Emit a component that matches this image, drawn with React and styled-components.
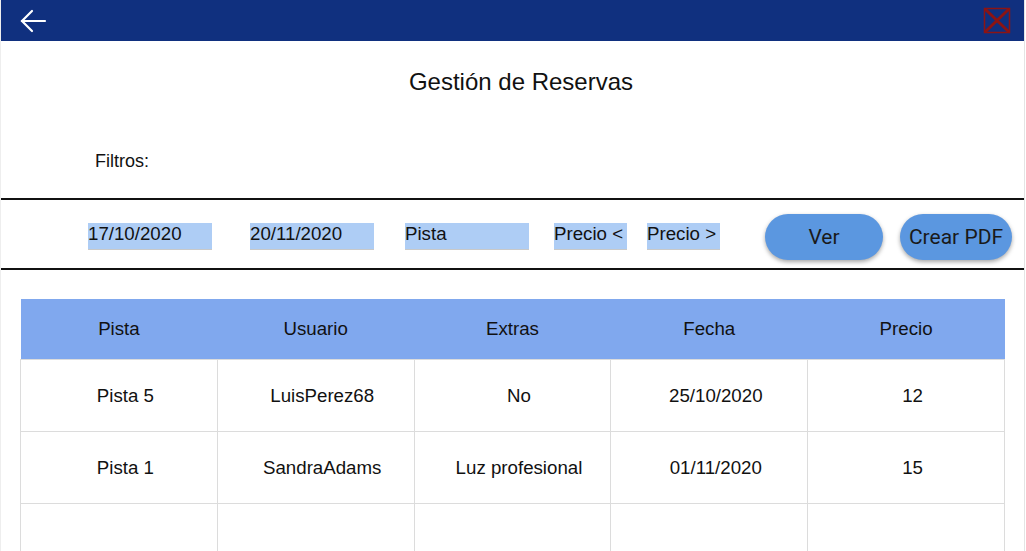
import React from 'react';
import styled, { createGlobalStyle } from 'styled-components';

const Global = createGlobalStyle`
  body {
    margin: 0;
    background: #fff;
    font-family: 'Liberation Sans', Arial, sans-serif;
    color: #111;
  }
`

const Page = styled.div`
  width: 1023px;
  height: 551px;
  overflow: hidden;
  border-left: 1px solid #eee;
  border-right: 1px solid #e4e4e4;
`

const TopBar = styled.header`
  height: 41px;
  background: #10307f;
  display: flex;
  justify-content: space-between;
  align-items: center;
  padding: 0 13px 0 18px;
`

const IconButton = styled.button`
  background: none;
  border: none;
  padding: 0;
  display: flex;
  cursor: pointer;
`

const Title = styled.h1`
  margin: 0;
  padding: 27px 0 0 17px;
  height: 42px;
  text-align: center;
  font-weight: normal;
  font-size: 24px;
`

const FilterLabel = styled.div`
  padding: 41px 0 0 94px;
  height: 47px;
  font-size: 18px;
`

const FilterBar = styled.div`
  border-top: 2px solid #111;
  border-bottom: 2px solid #111;
  height: 68px;
  display: flex;
  align-items: center;
  padding-left: 87px;
`

const Field = styled.div`
  width: ${p => p.w}px;
  margin-right: ${p => p.gap}px;
  height: 27px;
  margin-top: 5px;
  background: #aecdf5;
  border-bottom: 1px solid #c9c9c9;
  box-sizing: border-box;
  font-size: 18.7px;
  line-height: 22px;
  white-space: nowrap;
`

const Pill = styled.button`
  width: ${p => p.w}px;
  height: 46px;
  margin-left: ${p => p.gap}px;
  margin-top: 6px;
  border: none;
  border-radius: 23px;
  background: #5b97e0;
  box-shadow: 0 2px 4px rgba(0, 0, 0, 0.35);
  font-family: Roboto, 'Liberation Sans', sans-serif;
  font-size: 21px;
  color: #1a1a1a;
  padding: 0;
  cursor: pointer;
`

const Table = styled.table`
  margin: 29px 0 0 19px;
  width: 985px;
  border-collapse: collapse;
  table-layout: fixed;
  font-size: 18.7px;
`

const Head = styled.th`
  height: 60px;
  background: #80a8ee;
  font-weight: normal;
  padding: 0;
`

const Cell = styled.td`
  height: 71px;
  border: 1px solid #dcdcdc;
  text-align: center;
  padding: 0 0 0 13px;
`

const columns = ['Pista', 'Usuario', 'Extras', 'Fecha', 'Precio']

const rows = [
  ['Pista 5', 'LuisPerez68', 'No', '25/10/2020', '12'],
  ['Pista 1', 'SandraAdams', 'Luz profesional', '01/11/2020', '15'],
  ['', '', '', '', ''],
]

const filters = [
  { text: '17/10/2020', w: 124, gap: 38 },
  { text: '20/11/2020', w: 124, gap: 31 },
  { text: 'Pista', w: 124, gap: 25 },
  { text: 'Precio <', w: 73, gap: 20 },
  { text: 'Precio >', w: 73, gap: 0 },
]

function App() {
  return (
    <Page>
      <Global />
      <TopBar>
        <IconButton aria-label="Volver">
          <svg width="28" height="24" viewBox="0 0 28 24" fill="none" stroke="#fff" strokeWidth="2.2" strokeLinecap="round">
            <path d="M26 12H3" />
            <path d="M13 2L3 12l10 10" />
          </svg>
        </IconButton>
        <IconButton aria-label="Cerrar">
          <svg width="28" height="27" viewBox="0 0 28 27" fill="none" stroke="#8c1414">
            <rect x="1.5" y="1.5" width="25" height="24" strokeWidth="1.5" />
            <path d="M2 2l24 23M26 2L2 25" strokeWidth="3" />
          </svg>
        </IconButton>
      </TopBar>
      <Title>Gestión de Reservas</Title>
      <FilterLabel>Filtros:</FilterLabel>
      <FilterBar>
        {filters.map(f => (
          <Field key={f.text} w={f.w} gap={f.gap}>{f.text}</Field>
        ))}
        <Pill w={118} gap={45}>Ver</Pill>
        <Pill w={112} gap={17}>Crear PDF</Pill>
      </FilterBar>
      <Table>
        <thead>
          <tr>
            {columns.map(c => <Head key={c}>{c}</Head>)}
          </tr>
        </thead>
        <tbody>
          {rows.map((r, i) => (
            <tr key={i}>
              {r.map((v, j) => <Cell key={j}>{v}</Cell>)}
            </tr>
          ))}
        </tbody>
      </Table>
    </Page>
  )
}

export default App
